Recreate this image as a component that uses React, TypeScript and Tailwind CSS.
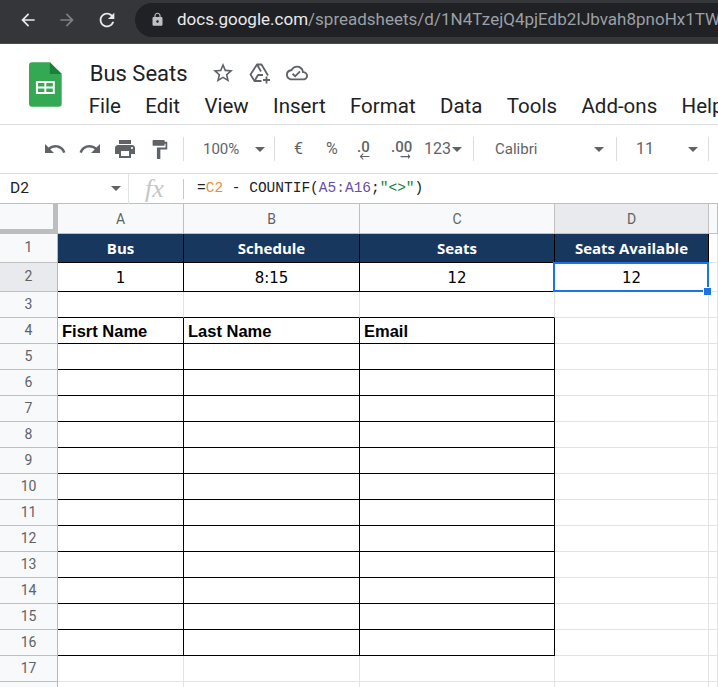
import { MdArrowBack, MdArrowForward, MdRefresh, MdLock, MdUndo, MdRedo, MdPrint, MdFormatPaint, MdStarBorder, MdOutlineCloudDone, MdArrowRightAlt, MdKeyboardBackspace } from "react-icons/md";

const menus = ["File", "Edit", "View", "Insert", "Format", "Data", "Tools", "Add-ons", "Help"];
const columns = ["A", "B", "C", "D", ""];
const headers = ["Bus", "Schedule", "Seats", "Seats Available"];
const values = ["1", "8:15", "12", "12"];
const labels = ["Fisrt Name", "Last Name", "Email"];

function Caret({ className = "" }: { className?: string }) {
  return <div className={`w-0 h-0 border-x-[5px] border-x-transparent border-t-[5px] border-t-[#5f6368] ${className}`} />;
}

function Sep() {
  return <div className="w-px h-6 bg-[#dadce0] shrink-0" />;
}

function SheetsLogo() {
  return (
    <svg width="33" height="45" viewBox="0 0 33 45">
      <path d="M3 0H21L33 12V42a3 3 0 0 1-3 3H3a3 3 0 0 1-3-3V3a3 3 0 0 1 3-3z" fill="#34a853" />
      <path d="M21 0L33 12H21z" fill="#188038" />
      <path d="M7 19H26V32H7zM9 21V24.5H15.5V21zM17.5 21V24.5H24V21zM9 26.5V30H15.5V26.5zM17.5 26.5V30H24V26.5z" fill="#fff" fillRule="evenodd" />
    </svg>
  );
}

function DriveAdd() {
  return (
    <svg width="24" height="24" viewBox="0 0 24 24" fill="none" stroke="#5f6368" strokeWidth="1.8" strokeLinejoin="round" className="ml-[13px]">
      <path d="M9 3.5H13.5L20 14.5M13.5 20H6.5L2.5 13.5L9 3.5L13 10.5" />
      <path d="M6.5 20L10 14H15" />
      <path d="M18.5 15.5V22.5M15 19H22" />
    </svg>
  );
}

function RowHeader({ n }: { n: number }) {
  return (
    <div className={`flex items-center justify-center pb-px border-b border-r border-b-[#c0c0c0] border-r-[#b8b8b8] text-[14px] text-[#5f6368] ${n === 2 ? "bg-[#e8eaed]" : "bg-[#f8f9fa]"}`}>
      {n}
    </div>
  );
}

function Blank({ black, bottomOnly }: { black?: boolean; bottomOnly?: boolean }) {
  let cls = "border-b border-r border-b-[#e2e3e3] border-r-[#e2e3e3]";
  if (black) cls = "border-b border-r border-black";
  if (bottomOnly) cls = "border-b border-r border-b-black border-r-[#e2e3e3]";
  return <div className={cls} />;
}

export default function App() {
  const bodyRows = Array.from({ length: 13 }, (_, i) => i + 5);

  return (
    <div className="w-[718px] h-[687px] overflow-hidden bg-white font-['Roboto',sans-serif]">
      {/* Browser bar */}
      <div className="h-[44px] bg-[#35363a] border-b border-[#4a4b4e] flex items-center pl-[18px] pb-[4px] text-white">
        <MdArrowBack size={20} className="text-[#e8eaed]" />
        <MdArrowForward size={20} className="ml-[19px] text-[#7f8184]" />
        <MdRefresh size={22} className="ml-[19px] text-[#e8eaed]" />
        <div className="ml-[17px] h-[34px] flex-1 min-w-0 rounded-l-full bg-[#202124] flex items-center pl-[15px] overflow-hidden whitespace-nowrap">
          <MdLock size={15} className="text-[#bdc1c6] shrink-0" />
          <span className="ml-[12px] text-[17px] text-[#e8eaed]">docs.google.com</span>
          <span className="text-[17px] text-[#9aa0a6]">/spreadsheets/d/1N4TzejQ4pjEdb2IJbvah8pnoHx1TW</span>
        </div>
      </div>

      {/* Doc header */}
      <div className="h-[81px] border-b border-[#dadce0] flex pl-[29px] pt-[18px]">
        <SheetsLogo />
        <div className="ml-[27px] min-w-0">
          <div className="flex items-center h-[22px] mb-[6px]">
            <span className="text-[22px] text-[#202124] ml-[1px]">Bus Seats</span>
            <MdStarBorder size={24} className="ml-[23px] text-[#5f6368]" />
            <DriveAdd />
            <MdOutlineCloudDone size={22} className="ml-[14px] text-[#5f6368]" />
          </div>
          <div className="flex gap-[24.4px] whitespace-nowrap text-[20.5px] text-[#202124] leading-[32px]">
            {menus.map((m) => (
              <span key={m}>{m}</span>
            ))}
          </div>
        </div>
      </div>

      {/* Toolbar */}
      <div className="h-[49px] border-b border-[#dadce0] flex items-center pl-[43px] text-[#5f6368] text-[15px] whitespace-nowrap">
        <MdUndo size={24} />
        <MdRedo size={24} className="ml-[11px]" />
        <MdPrint size={24} className="ml-[11px]" />
        <MdFormatPaint size={23} className="ml-[11px] scale-x-90" />
        <div className="ml-[12px]"><Sep /></div>
        <span className="ml-[19px] w-[52px]">100%</span>
        <Caret />
        <div className="ml-[9px]"><Sep /></div>
        <span className="ml-[19px] w-[32px] text-[16px]">€</span>
        <span className="w-[31px] text-[16px]">%</span>
        <div className="relative w-[34px] h-[26px] leading-[22px] font-medium">
          .0
          <MdKeyboardBackspace size={13} className="absolute left-[1px] top-[14px]" />
        </div>
        <div className="relative w-[33px] h-[26px] leading-[22px] font-medium">
          .00
          <MdArrowRightAlt size={15} className="absolute left-[7px] top-[13px]" />
        </div>
        <span className="text-[16px] w-[28px]">123</span>
        <Caret />
        <div className="ml-[11px]"><Sep /></div>
        <span className="ml-[21px] w-[99px]">Calibri</span>
        <Caret />
        <div className="ml-[12px]"><Sep /></div>
        <span className="ml-[19px] w-[52px] text-[16px]">11</span>
        <Caret />
        <div className="ml-[10px]"><Sep /></div>
      </div>

      {/* Formula bar */}
      <div className="h-[30px] border-b border-[#c0c0c0] flex items-center whitespace-nowrap">
        <span className="ml-[10px] w-[100px] text-[15.5px] text-[#202124]">D2</span>
        <Caret className="ml-[1px]" />
        <div className="ml-[7px] w-px h-[30px] bg-[#e2e3e3]" />
        <span className="ml-[16px] w-[38px] text-[26px] leading-[28px] italic text-[#c4c7c5] font-['Liberation_Serif',serif]">fx</span>
        <div className="w-px h-[20px] bg-[#c8c8c8]" />
        <div className="ml-[13px] pt-px text-[14.5px] text-[#202124] font-['Liberation_Mono',monospace]">
          =<span className="text-[#e69138]">C2</span> - COUNTIF(<span className="text-[#674ea7]">A5:A16</span>;<span className="text-[#188038]">"&lt;&gt;"</span>)
        </div>
      </div>

      {/* Sheet */}
      <div className="relative grid grid-cols-[58px_126px_176px_195px_154px_1fr] grid-rows-[30px_29px_29px_repeat(16,26px)]">
        <div className="bg-[#f8f9fa] border-b-[5px] border-r-[5px] border-[#bdbdbd]" />
        {columns.map((c) => (
          <div
            key={c || "E"}
            className={`flex items-center justify-center pt-px border-b border-r border-[#c0c0c0] text-[14px] text-[#5f6368] ${c === "D" ? "bg-[#e8eaed]" : "bg-[#f8f9fa]"}`}
          >
            {c}
          </div>
        ))}

        <RowHeader n={1} />
        {headers.map((h) => (
          <div key={h} className="flex items-center justify-center bg-[#17375e] border-b border-r border-black text-white text-[15px] font-bold font-['Open_Sans',sans-serif]">
            {h}
          </div>
        ))}
        <Blank />

        <RowHeader n={2} />
        {values.map((v, i) => (
          <div key={i} className="relative flex items-center justify-center pt-[2px] border-b border-r border-black text-[15px] text-black font-['DejaVu_Sans',sans-serif]">
            {v}
            {i === 3 && (
              <div className="absolute -left-[2px] -top-[1px] -right-px -bottom-px border-2 border-[#1a73e8]">
                <div className="absolute -right-[5px] -bottom-[6px] w-[9px] h-[9px] bg-[#1a73e8] border border-white" />
              </div>
            )}
          </div>
        ))}
        <Blank />

        <RowHeader n={3} />
        <Blank bottomOnly />
        <Blank bottomOnly />
        <Blank bottomOnly />
        <Blank />
        <Blank />

        <RowHeader n={4} />
        {labels.map((l) => (
          <div key={l} className="flex items-center pl-[4px] pt-[1px] border-b border-r border-black text-[16.5px] font-bold text-black font-['Liberation_Sans',sans-serif]">
            {l}
          </div>
        ))}
        <Blank />
        <Blank />

        {bodyRows.map((n) => (
          <div key={n} className="contents">
            <RowHeader n={n} />
            <Blank black={n < 17} />
            <Blank black={n < 17} />
            <Blank black={n < 17} />
            <Blank />
            <Blank />
          </div>
        ))}

        {/* row 18 is only just visible */}
        <div className="bg-[#f8f9fa] border-r border-[#b8b8b8]" />
        <Blank />
        <Blank />
        <Blank />
        <Blank />
        <Blank />
      </div>
    </div>
  );
}
